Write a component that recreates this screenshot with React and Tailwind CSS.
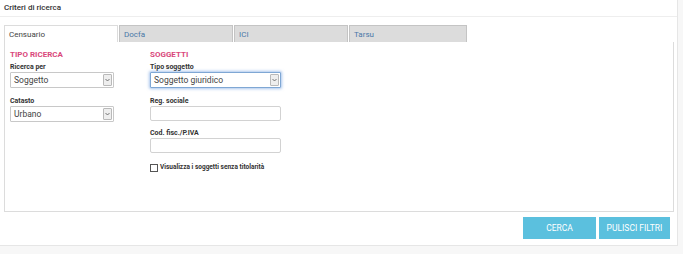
import React from "react";

function Select({ value, w, focus }) {
  return (
    <div
      className={`flex h-[16px] items-center justify-between rounded-[1px] border bg-white pl-[3px] pr-[1px] ${w} ${
        focus ? "border-[#7fa7d4] shadow-[0_0_3px_1px_rgba(100,150,220,0.55)]" : "border-[#c8c8c8]"
      }`}
    >
      <span className="text-[8.5px] leading-none text-[#444]">{value}</span>
      <span className="flex h-[12px] w-[9px] items-center justify-center rounded-[1px] border border-[#b9b9b9] bg-[#eeeeee]">
        <svg width="5" height="4" viewBox="0 0 5 4">
          <path d="M0.5 1 L2.5 3 L4.5 1" stroke="#555" strokeWidth="0.8" fill="none" />
        </svg>
      </span>
    </div>
  );
}

function Input({ w }) {
  return <div className={`h-[15px] rounded-[2px] border border-[#d2d2d2] bg-white ${w}`} />;
}

function Label({ children }) {
  return <div className="mb-[1px] text-[7px] font-bold leading-[7px] text-[#333]">{children}</div>;
}

export default function App() {
  const tabs = ["Censuario", "Docfa", "ICI", "Tarsu"];
  return (
    <div className="flex h-[254px] w-[683px] bg-[#f7f7f7]" style={{ fontFamily: "Roboto, 'Liberation Sans', sans-serif" }}>
      <div className="flex h-[246px] w-[678px] flex-col border-r border-b border-[#e6e6e6] bg-white">
        <div className="flex h-[17px] items-center border-b border-[#eeeeee] pl-[4px] text-[8px] font-medium text-[#333]">
          Criteri di ricerca
        </div>
        <div className="mt-[8px] flex flex-col px-[4px]">
          <div className="flex h-[18px] items-stretch">
            {tabs.map((t, i) => (
              <div
                key={t}
                className={`mr-[1px] flex w-[114px] items-center border border-b-0 pl-[4px] text-[8px] ${
                  i === 0
                    ? "border-[#dcdcdc] bg-white text-[#444]"
                    : "border-[#c4c4c4] bg-[#dcdcdc] text-[#4a78a8]"
                } ${i === 3 ? "w-[118px]" : ""}`}
              >
                {t}
              </div>
            ))}
            <div className="flex-1 border-b border-[#dcdcdc]" />
          </div>
          <div className="-mt-[1px] flex h-[170px] w-[670px] border border-t-0 border-[#dcdcdc] bg-white">
            <div className="flex w-[145px] flex-col pl-[5px] pt-[9px]">
              <div className="mb-[5px] text-[8px] font-bold leading-none text-[#d9487b]">TIPO RICERCA</div>
              <Label>Ricerca per</Label>
              <Select value="Soggetto" w="w-[104px]" />
              <div className="h-[10px]" />
              <Label>Catasto</Label>
              <Select value="Urbano" w="w-[104px]" />
            </div>
            <div className="flex flex-col pt-[9px]">
              <div className="mb-[5px] text-[8px] font-bold leading-none text-[#d9487b]">SOGGETTI</div>
              <Label>Tipo soggetto</Label>
              <Select value="Soggetto giuridico" w="w-[131px]" focus />
              <div className="h-[10px]" />
              <Label>Reg. sociale</Label>
              <Input w="w-[131px]" />
              <div className="h-[9px]" />
              <Label>Cod. fisc./P.IVA</Label>
              <Input w="w-[131px]" />
              <div className="mt-[10px] flex items-center gap-[2px]">
                <span className="h-[8px] w-[8px] border border-[#555] bg-white" />
                <span className="text-[6.5px] font-bold text-[#333]">Visualizza i soggetti senza titolarità</span>
              </div>
            </div>
          </div>
          <div className="mt-[5px] flex justify-end gap-[3px] pr-[3px]">
            <div className="flex h-[22px] w-[73px] items-center justify-center bg-[#5bc0de] text-[8.5px] text-white">CERCA</div>
            <div className="flex h-[22px] w-[71px] items-center justify-center bg-[#5bc0de] text-[8.5px] text-white">PULISCI FILTRI</div>
          </div>
        </div>
      </div>
    </div>
  );
}
